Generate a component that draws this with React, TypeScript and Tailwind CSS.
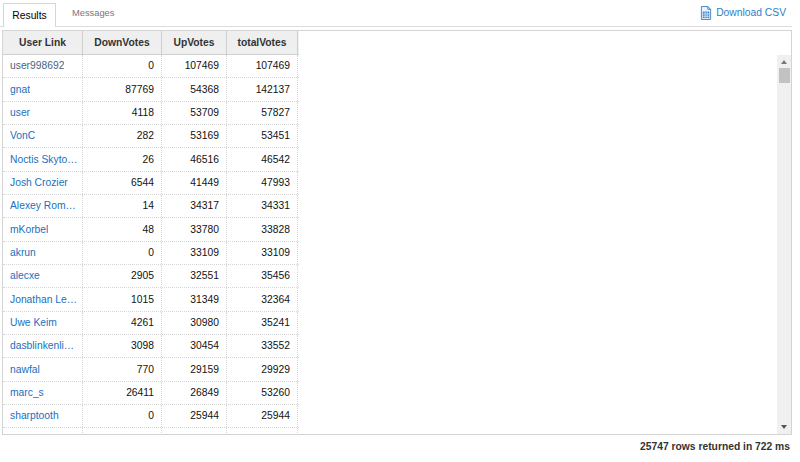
import React from "react";

interface Row {
  name: string;
  down: number;
  up: number;
  total: number;
  plain?: boolean;
}

const rows: Row[] = [
  { name: "user998692", down: 0, up: 107469, total: 107469, plain: true },
  { name: "gnat", down: 87769, up: 54368, total: 142137 },
  { name: "user", down: 4118, up: 53709, total: 57827 },
  { name: "VonC", down: 282, up: 53169, total: 53451 },
  { name: "Noctis Skytower", down: 26, up: 46516, total: 46542 },
  { name: "Josh Crozier", down: 6544, up: 41449, total: 47993 },
  { name: "Alexey Romanov", down: 14, up: 34317, total: 34331 },
  { name: "mKorbel", down: 48, up: 33780, total: 33828 },
  { name: "akrun", down: 0, up: 33109, total: 33109 },
  { name: "alecxe", down: 2905, up: 32551, total: 35456 },
  { name: "Jonathan Leffler", down: 1015, up: 31349, total: 32364 },
  { name: "Uwe Keim", down: 4261, up: 30980, total: 35241 },
  { name: "dasblinkenlight", down: 3098, up: 30454, total: 33552 },
  { name: "nawfal", down: 770, up: 29159, total: 29929 },
  { name: "marc_s", down: 26411, up: 26849, total: 53260 },
  { name: "sharptooth", down: 0, up: 25944, total: 25944 },
  { name: "Mary Sonofi", down: 1077, up: 25365, total: 26442 },
];

const cols = ["w-[80px]", "w-[79px]", "w-[65px]", "w-[71px]"];

const CsvIcon = () => (
  <svg width="12" height="14" viewBox="0 0 13 15" fill="none" className="mr-[4px]">
    <path d="M1.5 0.5h7l3 3v11h-10z" stroke="#3b82c4" fill="#eaf3fb" />
    <path d="M8.5 0.5v3h3" stroke="#3b82c4" />
    <rect x="3" y="6" width="7" height="7" fill="#3b82c4" />
    <path d="M3 8.5h7M3 11h7M5.5 6v7M7.8 6v7" stroke="#eaf3fb" strokeWidth="0.8" />
  </svg>
);

const App: React.FC = () => {
  return (
    <div className="w-[800px] h-[462px] bg-white font-['Liberation_Sans',Arial,sans-serif] text-[10.3px] text-[#222] overflow-hidden">
      <div className="flex items-end justify-between h-[27px] w-[792px] border-b border-[#dcdcdc]">
        <div className="flex items-end ml-[3px]">
          <div className="h-[24px] w-[53px] -mb-px border border-b-0 border-[#d6d6d6] bg-white flex items-center justify-center text-[10.3px] text-black">
            Results
          </div>
          <div className="h-[24px] ml-[16px] flex items-center text-[9.3px] text-[#777]">
            Messages
          </div>
        </div>
        <a className="flex items-center h-[26px] mr-[6px] text-[10.3px] text-[#2a7fc8]">
          <CsvIcon />
          Download CSV
        </a>
      </div>

      <div className="relative mt-[3px] ml-[2px] w-[790px] h-[405px] border border-[#d4d4d4] overflow-hidden">
        <div className="w-[296px]">
          <div className="flex h-[24px] bg-[#efefef] border-b border-[#cfcfcf] font-bold text-[#333]">
            {["User Link", "DownVotes", "UpVotes", "totalVotes"].map((h, i) => (
              <div
                key={h}
                className={`${cols[i]} flex items-center justify-center border-r border-[#cfcfcf]`}
              >
                {h}
              </div>
            ))}
          </div>
          {rows.map((r) => (
            <div key={r.name} className="flex h-[23.33px] border-b border-dotted border-[#d6d6d6]">
              <div
                className={`w-[80px] flex items-center pl-[7px] pr-[4px] border-r border-dotted border-[#d6d6d6] whitespace-nowrap overflow-hidden ${
                  r.plain ? "text-[#4c6480]" : "text-[#1a6fc0]"
                }`}
              >
                <span className="truncate">{r.name}</span>
              </div>
              {[r.down, r.up, r.total].map((v, i) => (
                <div
                  key={i}
                  className={`${cols[i + 1]} flex items-center justify-end px-[7px] border-r border-dotted border-[#d6d6d6] text-[#111]`}
                >
                  {v}
                </div>
              ))}
            </div>
          ))}
        </div>

        <div className="absolute right-0 top-[24px] bottom-0 w-[14px] bg-[#f0f0f0] flex flex-col items-center">
          <div className="mt-[5px] w-0 h-0 border-l-[3px] border-r-[3px] border-b-[4px] border-l-transparent border-r-transparent border-b-[#777]" />
          <div className="mt-[4px] w-[11px] h-[15px] bg-[#c2c2c2]" />
          <div className="flex-1" />
          <div className="mb-[5px] w-0 h-0 border-l-[3px] border-r-[3px] border-t-[4px] border-l-transparent border-r-transparent border-t-[#555]" />
        </div>
      </div>

      <div className="w-[790px] text-right mt-[4px] font-bold text-[#333] text-[10.3px]">
        25747 rows returned in 722 ms
      </div>
    </div>
  );
};

export default App;
